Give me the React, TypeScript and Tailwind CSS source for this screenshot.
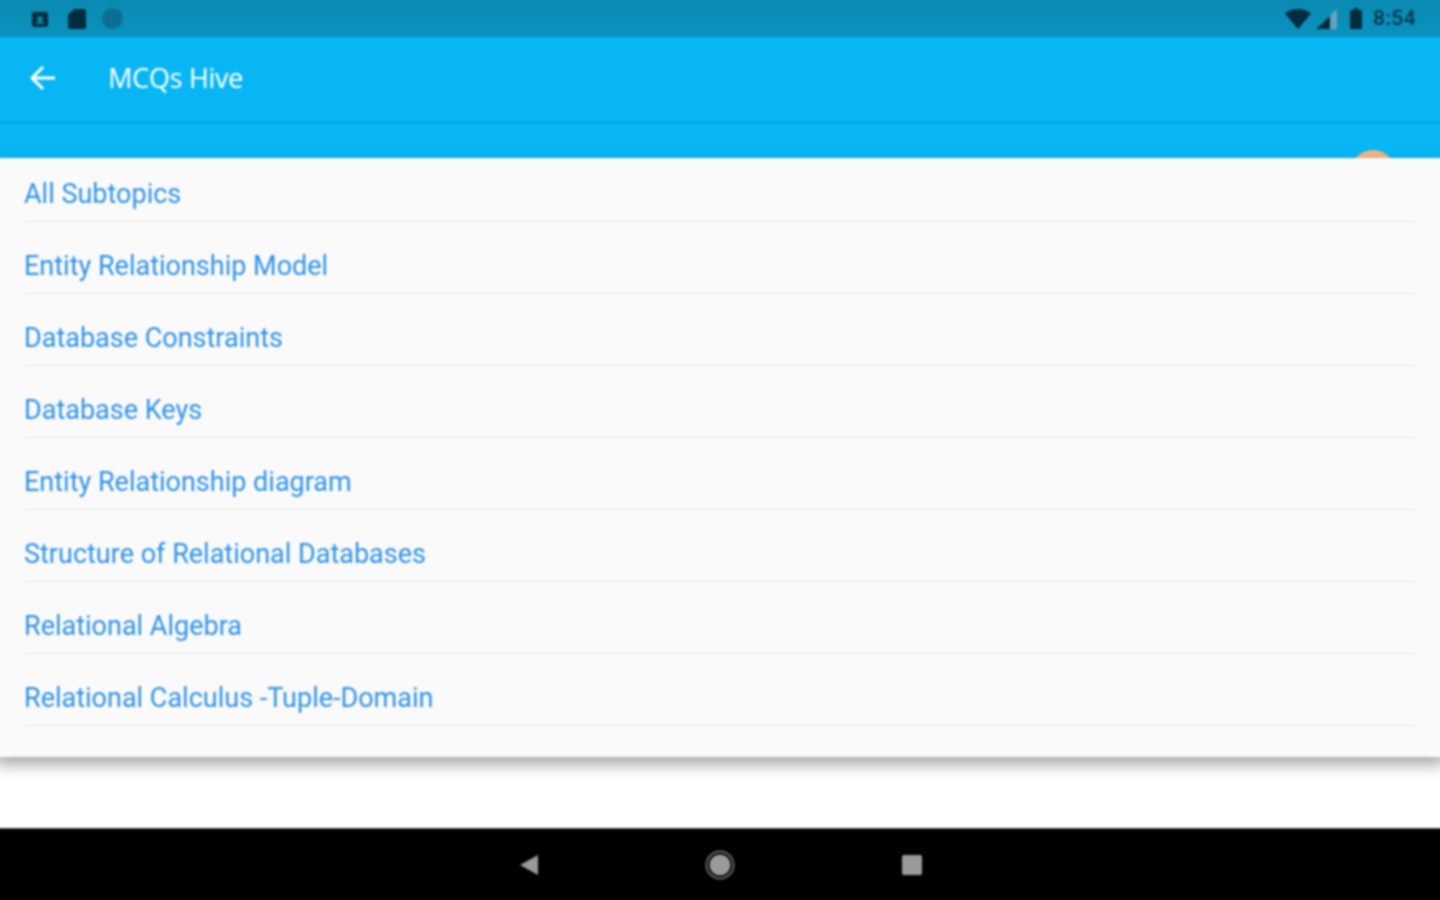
import React from 'react';

const subtopics = [
  'All Subtopics',
  'Entity Relationship Model',
  'Database Constraints',
  'Database Keys',
  'Entity Relationship diagram',
  'Structure of Relational Databases',
  'Relational Algebra',
  'Relational Calculus -Tuple-Domain',
];

const StatusBar = () => (
  <div className="h-[41px] shrink-0 flex items-center justify-between bg-gradient-to-b from-[#0a8ab2] to-[#0a92be] pl-[35px] pr-[28px] pt-1">
    <div className="flex items-center">
      <svg width="18" height="18" viewBox="0 0 18 18" className="mr-[19px]">
        <rect x="1" y="2" width="16" height="15" rx="2" fill="#042c40" />
        <circle cx="9" cy="9" r="3" fill="#0a7fa6" />
        <rect x="5" y="12" width="8" height="2" fill="#0a7fa6" />
      </svg>
      <svg width="18" height="20" viewBox="0 0 18 20" className="mr-[16px]">
        <path d="M6 0h10a2 2 0 0 1 2 2v16a2 2 0 0 1-2 2H2a2 2 0 0 1-2-2V6z" fill="#042c40" />
      </svg>
      <div className="w-[21px] h-[21px] rounded-full bg-[#0b6f93]" />
    </div>
    <div className="flex items-center">
      <svg width="26" height="20" viewBox="0 0 26 20" className="mr-[5px]">
        <path d="M0 4.500C3.500 1.700 8 0 13 0s9.500 1.700 13 4.500L13 20z" fill="#042c40" />
      </svg>
      <svg width="21" height="20" viewBox="0 0 21 20" className="mr-[13px]">
        <path d="M21 0v20H0z" fill="#62a5bf" />
        <path d="M14 7v13H0z" fill="#042c40" />
      </svg>
      <svg width="12" height="21" viewBox="0 0 12 21" className="mr-[11px]">
        <path d="M4 0h4v2h3a1 1 0 0 1 1 1v17a1 1 0 0 1-1 1H1a1 1 0 0 1-1-1V3a1 1 0 0 1 1-1h3z" fill="#042c40" />
      </svg>
      <span className="font-['Roboto',sans-serif] text-[21px] leading-none font-medium tracking-[0.4px] text-[#06384f]">8:54</span>
    </div>
  </div>
);

const Toolbar = () => (
  <div className="h-[86px] shrink-0 flex items-center bg-[#08b6f3] pl-[34px] border-b-2 border-[#0aa0d5]">
    <svg width="26" height="26" viewBox="0 0 26 26" fill="none" stroke="#ffffff" strokeWidth="3" className="mr-[52px] -translate-y-px">
      <path d="M25 13H2M13 2 2 13l11 11" />
    </svg>
    <span className="font-['Open_Sans',sans-serif] text-[27px] leading-none text-white tracking-[-0.3px] -translate-y-0.5">MCQs Hive</span>
  </div>
);

const SubtopicRow = ({ label }: { label: string }) => (
  <div className="mx-7 h-[72px] first:h-[64px] flex items-end pb-[13px] border-b border-[#e6e6e6]">
    <span className="font-['Roboto',sans-serif] text-[27px] leading-[28px] text-[#2f93e6]">{label}</span>
  </div>
);

export default function App() {
  return (
    <div className="w-[1440px] h-[900px] overflow-hidden bg-white">
      {/* bleeds 4px past the window so the blur does not fade at the edges */}
      <div className="w-[1448px] h-[908px] -m-1 flex flex-col bg-white blur-[1px]">
        <StatusBar />
        <Toolbar />
        <div className="relative h-[35px] shrink-0 bg-[#08b6f3]">
          <div className="absolute left-[1354px] top-[27px] w-[46px] h-[46px] rounded-full bg-[#f0b583]" />
        </div>
        <div className="relative h-[599px] shrink-0 bg-[#fafafa] shadow-[0_8px_14px_rgba(0,0,0,0.34)]">
          {subtopics.map(label => (
            <SubtopicRow key={label} label={label} />
          ))}
        </div>
        <div className="flex-1 bg-white" />
        <div className="h-[76px] shrink-0 flex items-center justify-center bg-black border-t border-[#555555] pb-1">
          <svg width="20" height="22" viewBox="0 0 20 22" className="mr-[167px] translate-x-px">
            <path d="M19 1v20L1 11z" fill="#9a9a9a" />
          </svg>
          <svg width="30" height="30" viewBox="0 0 30 30" className="mr-[167px]">
            <circle cx="15" cy="15" r="13.500" fill="none" stroke="#666666" strokeWidth="2" />
            <circle cx="15" cy="15" r="10.500" fill="#9a9a9a" />
          </svg>
          <div className="w-[20px] h-[20px] rounded-[2px] bg-[#9a9a9a]" />
        </div>
      </div>
    </div>
  );
}
